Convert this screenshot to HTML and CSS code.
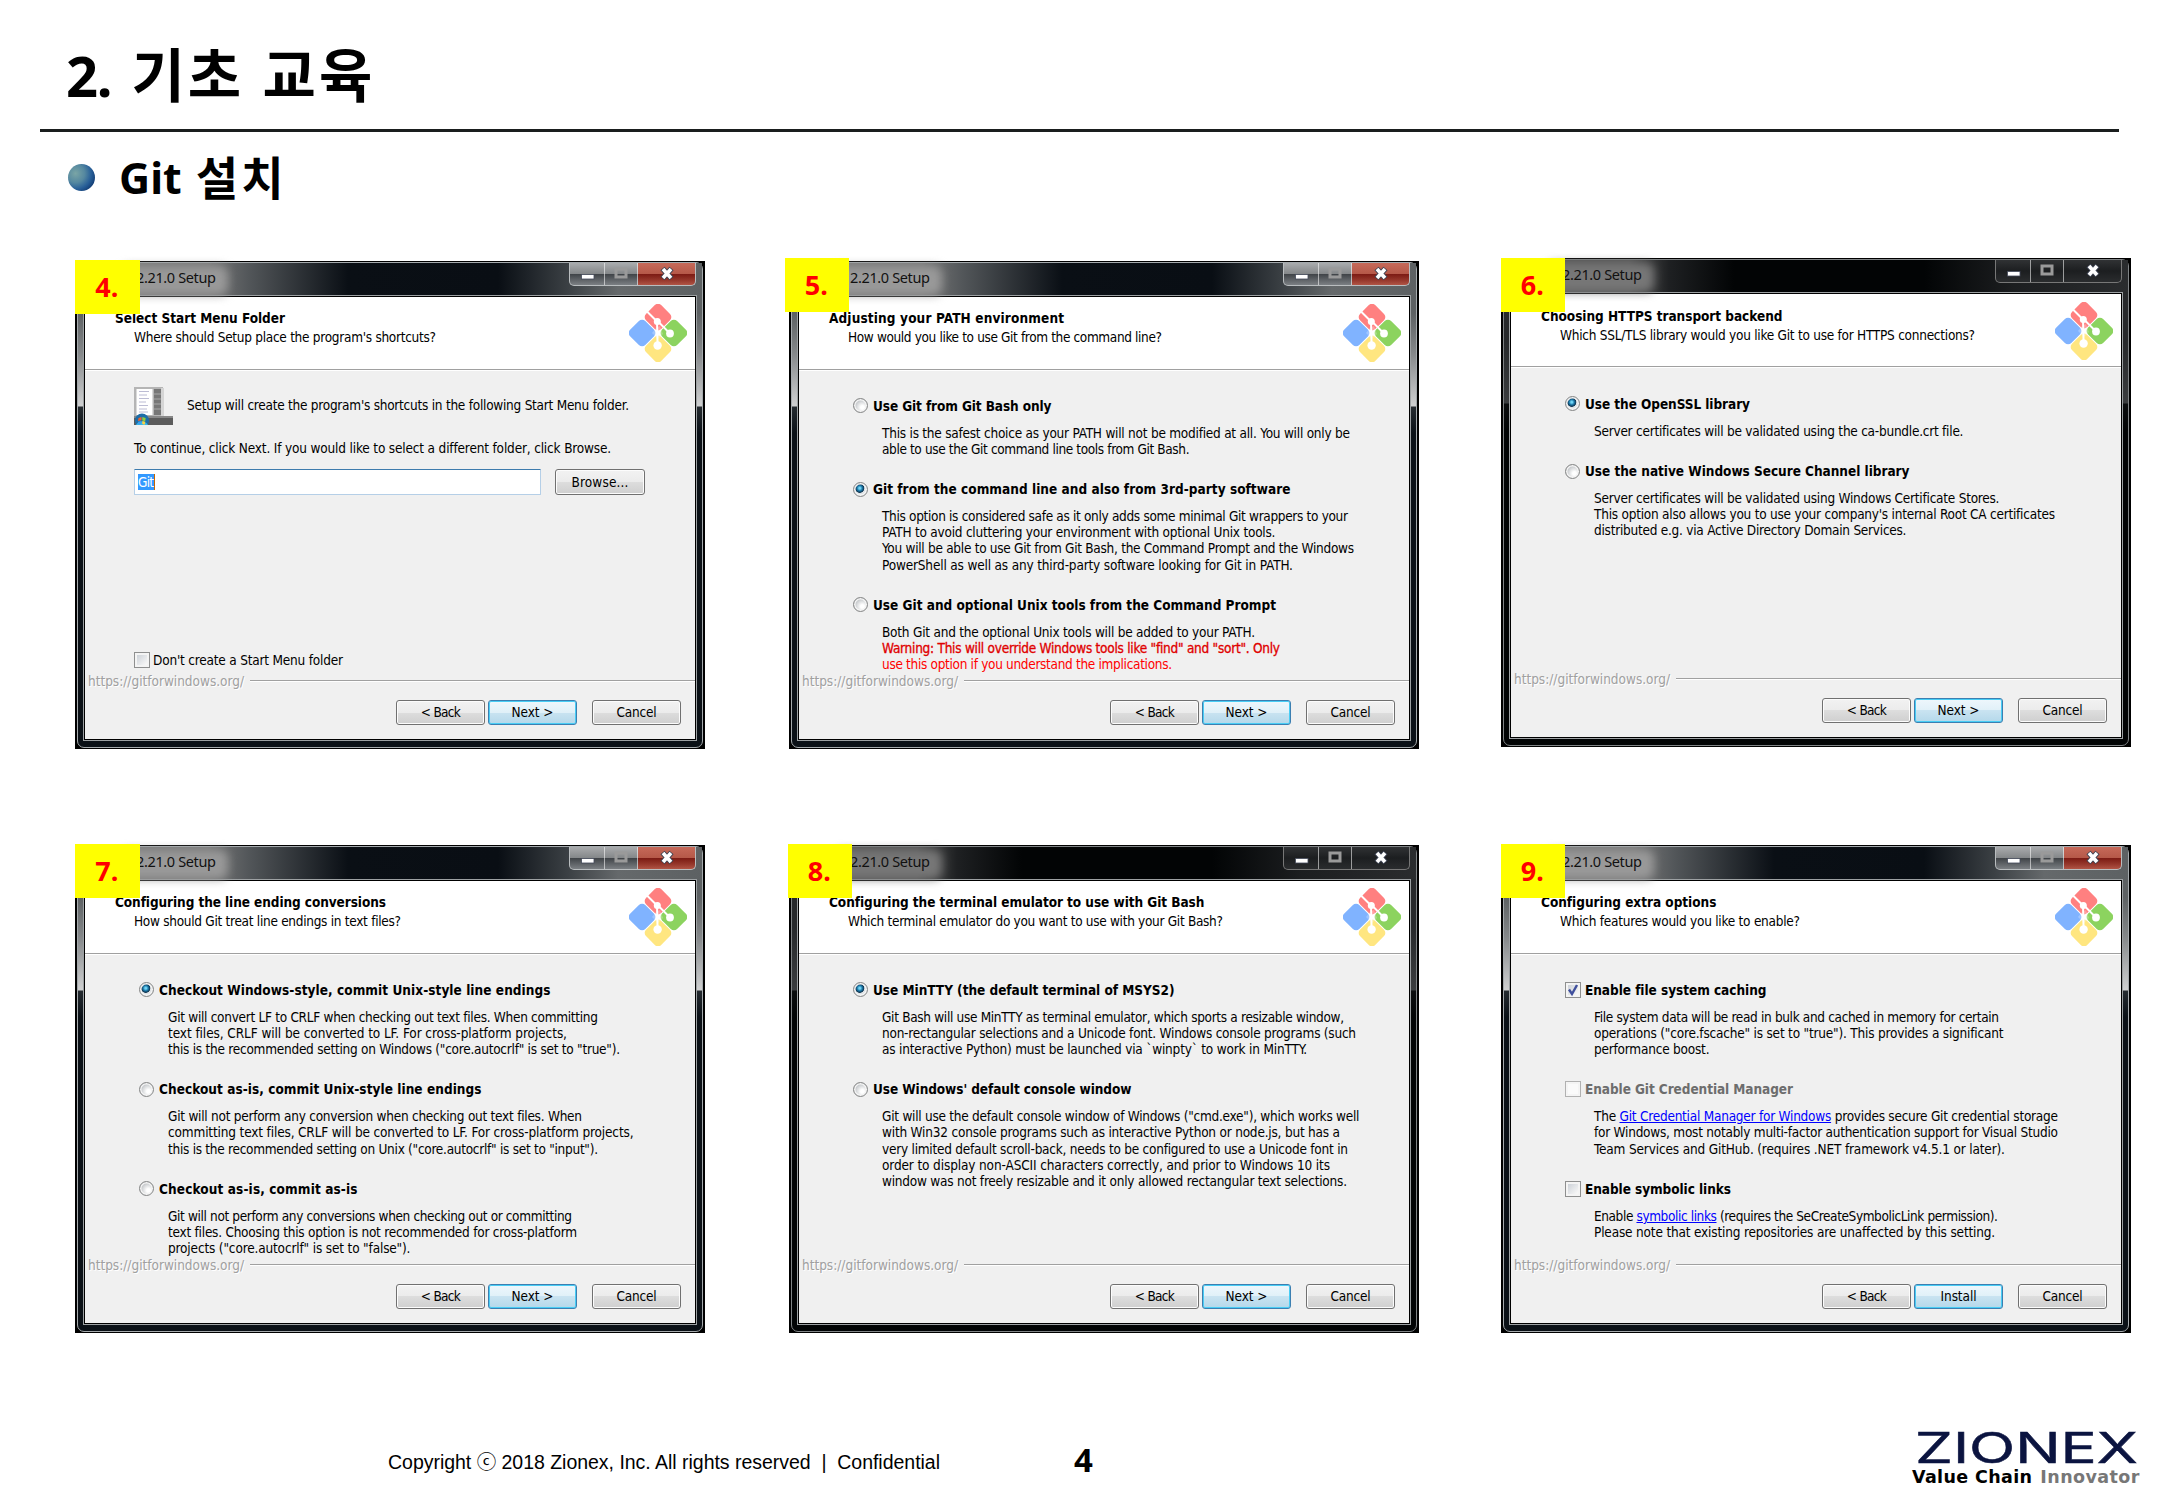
FILE: index.html
```html
<!DOCTYPE html>
<html lang="ko">
<head>
<meta charset="utf-8">
<title>2. 기초 교육</title>
<link rel="stylesheet" href="styles.css">
</head>
<body>
<svg class="defs" width="0" height="0" aria-hidden="true">
  <defs>
    <symbol id="git" viewBox="0 0 58 58">
      <g transform="rotate(45 29 29)">
        <rect x="7" y="7" width="21.500" height="21.500" rx="4.500" fill="#ff8080"/>
        <rect x="29.500" y="7" width="21.500" height="21.500" rx="4.500" fill="#8cd35f"/>
        <rect x="29.500" y="29.500" width="21.500" height="21.500" rx="4.500" fill="#ffe680"/>
        <rect x="7" y="29.500" width="21.500" height="21.500" rx="4.500" fill="#80b3ff"/>
        <path d="M24 24h10v10h-10z" fill="none"/>
      </g>
      <path d="M27 24L23 29L29 35L34 30L31 22z" fill="#fff" fill-opacity=".25"/>
      <path d="M17 6.500L28 17.500L28.600 41M28.500 17L41 29.500" fill="none" stroke="#fff" stroke-width="2"/>
      <circle cx="28.300" cy="17.500" r="3.500" fill="#fff"/>
      <circle cx="41" cy="29.500" r="3.900" fill="#fff"/>
      <circle cx="28.600" cy="41.500" r="4.200" fill="#fff"/>
    </symbol>
    <symbol id="controls" viewBox="0 0 125 22">
      <path d="M34.500 0V22M67.500 0V22" stroke="#fff" stroke-opacity=".55"/>
      <rect x="11.500" y="11.500" width="12.500" height="4.500" fill="#fff" stroke="#444a5a" stroke-width=".8"/>
      <rect x="46" y="6" width="10" height="8" fill="none" stroke="#9a9a9a" stroke-width="3"/>
      <path d="M92.500 5.500L101.500 15.500M101.500 5.500L92.500 15.500" stroke="#3c4252" stroke-width="5.600"/>
      <path d="M93 6L101 15M101 6L93 15" stroke="#fff" stroke-width="3.600"/>
    </symbol>
  </defs>
</svg>
<main class="slide">
  <header class="head"><h1><span class="no">2.</span><span class="ko" data-w="241">기초 교육</span></h1></header>
  <section class="topic"><span class="ball"></span><h2><span>Git</span><span class="ko" data-w="88">설치</span></h2></section>

  <section class="grid">
    <article class="window">
      <span class="badge">4.</span>
      <div class="frame">
        <div class="bar"><span class="caption" data-w="80">2.21.0 Setup</span><svg class="controls"><use href="#controls"/></svg></div>
        <div class="client">
          <div class="top"><div><h3 data-w="170">Select Start Menu Folder</h3><p data-w="302">Where should Setup place the program's shortcuts?</p></div><svg class="git"><use href="#git"/></svg></div>
          <div class="body folder">
            <div class="intro">
              <svg width="39" height="38" viewBox="0 0 39 38">
                <rect x="0" y="0" width="29" height="30" fill="#b5b5b5"/><rect x="27" y="1" width="3" height="28" fill="#d5d5d5"/>
                <rect x="2.500" y="2" width="16" height="26" fill="#fff"/>
                <path d="M5 4.500h10M5 8h8M5 11.500h10M5 15h7M5 18.500h9M5 22h8M5 25h9" stroke="#bcbcd4"/>
                <rect x="20" y="2" width="7" height="26" fill="#777"/><path d="M20 7h7M20 12h7M20 17h7M20 22h7" stroke="#aaa"/>
                <rect x="0" y="29" width="39" height="9" fill="#5c5c5c"/><rect x="0" y="29" width="39" height="2" fill="#888"/>
                <circle cx="8" cy="33.500" r="7" fill="#1d6da8"/><path d="M2 38a7 7 0 0 1 12 0z" fill="#38b6e8"/>
                <path d="M4.500 31l3-1v3.300l-3.500.7z" fill="#f0602c"/><path d="M8.300 30l3.400 1-.5 3.200-2.900-.8z" fill="#8fce3c"/><path d="M4 34.700l3.500-.7v3l-3.300.6z" fill="#39a0ee"/><path d="M8.300 34l3 .8-.7 3-2.300-.7z" fill="#ffd23c"/>
              </svg>
              <span data-w="442">Setup will create the program's shortcuts in the following Start Menu folder.</span>
            </div>
            <p class="hint"><span data-w="477">To continue, click Next. If you would like to select a different folder, click Browse.</span></p>
            <div class="path"><div class="input"><span class="sel"><span data-w="16">Git</span></span></div><span class="btn browse"><span data-w="57">Browse...</span></span></div>
            <div class="nofolder"><i class="check"></i><span data-w="190">Don't create a Start Menu folder</span></div>
          </div>
          <div class="url"><span data-w="156">https://gitforwindows.org/</span></div>
          <div class="actions"><span class="btn"><span data-w="40">&lt; Back</span></span><span class="btn main"><span data-w="42">Next &gt;</span></span><span class="btn cancel"><span data-w="40">Cancel</span></span></div>
        </div>
      </div>
    </article>

    <article class="window">
      <span class="badge b5">5.</span>
      <div class="frame">
        <div class="bar"><span class="caption" data-w="80">2.21.0 Setup</span><svg class="controls"><use href="#controls"/></svg></div>
        <div class="client">
          <div class="top"><div><h3 data-w="235">Adjusting your PATH environment</h3><p data-w="314">How would you like to use Git from the command line?</p></div><svg class="git"><use href="#git"/></svg></div>
          <div class="body">
            <div class="option"><i class="radio"></i><b data-w="178.500">Use Git from Git Bash only</b></div>
            <div class="desc"><span data-w="468">This is the safest choice as your PATH will not be modified at all. You will only be</span><span data-w="307.500">able to use the Git command line tools from Git Bash.</span></div>
            <div class="option"><i class="radio on"></i><b data-w="417.500">Git from the command line and also from 3rd-party software</b></div>
            <div class="desc"><span data-w="466">This option is considered safe as it only adds some minimal Git wrappers to your</span><span data-w="393.500">PATH to avoid cluttering your environment with optional Unix tools.</span><span data-w="472">You will be able to use Git from Git Bash, the Command Prompt and the Windows</span><span data-w="411">PowerShell as well as any third-party software looking for Git in PATH.</span></div>
            <div class="option"><i class="radio"></i><b data-w="403">Use Git and optional Unix tools from the Command Prompt</b></div>
            <div class="desc"><span data-w="373">Both Git and the optional Unix tools will be added to your PATH.</span><span class="warn strong" data-w="398">Warning: This will override Windows tools like "find" and "sort". Only</span><span class="warn" data-w="290">use this option if you understand the implications.</span></div>
          </div>
          <div class="url"><span data-w="156">https://gitforwindows.org/</span></div>
          <div class="actions"><span class="btn"><span data-w="40">&lt; Back</span></span><span class="btn main"><span data-w="42">Next &gt;</span></span><span class="btn cancel"><span data-w="40">Cancel</span></span></div>
        </div>
      </div>
    </article>

    <article class="window idle raised">
      <span class="badge b6">6.</span>
      <div class="frame">
        <div class="bar"><span class="caption" data-w="80">2.21.0 Setup</span><svg class="controls"><use href="#controls"/></svg></div>
        <div class="client">
          <div class="top"><div><h3 data-w="241.500">Choosing HTTPS transport backend</h3><p data-w="415">Which SSL/TLS library would you like Git to use for HTTPS connections?</p></div><svg class="git"><use href="#git"/></svg></div>
          <div class="body">
            <div class="option"><i class="radio on"></i><b data-w="165">Use the OpenSSL library</b></div>
            <div class="desc"><span data-w="369.500">Server certificates will be validated using the ca-bundle.crt file.</span></div>
            <div class="option"><i class="radio"></i><b data-w="324.500">Use the native Windows Secure Channel library</b></div>
            <div class="desc"><span data-w="405.500">Server certificates will be validated using Windows Certificate Stores.</span><span data-w="461">This option also allows you to use your company's internal Root CA certificates</span><span data-w="312.500">distributed e.g. via Active Directory Domain Services.</span></div>
          </div>
          <div class="url"><span data-w="156">https://gitforwindows.org/</span></div>
          <div class="actions"><span class="btn"><span data-w="40">&lt; Back</span></span><span class="btn main"><span data-w="42">Next &gt;</span></span><span class="btn cancel"><span data-w="40">Cancel</span></span></div>
        </div>
      </div>
    </article>

    <article class="window">
      <span class="badge">7.</span>
      <div class="frame">
        <div class="bar"><span class="caption" data-w="80">2.21.0 Setup</span><svg class="controls"><use href="#controls"/></svg></div>
        <div class="client">
          <div class="top"><div><h3 data-w="270.500">Configuring the line ending conversions</h3><p data-w="267">How should Git treat line endings in text files?</p></div><svg class="git"><use href="#git"/></svg></div>
          <div class="body">
            <div class="option"><i class="radio on"></i><b data-w="391.500">Checkout Windows-style, commit Unix-style line endings</b></div>
            <div class="desc"><span data-w="430">Git will convert LF to CRLF when checking out text files. When committing</span><span data-w="399">text files, CRLF will be converted to LF. For cross-platform projects,</span><span data-w="452">this is the recommended setting on Windows ("core.autocrlf" is set to "true").</span></div>
            <div class="option"><i class="radio"></i><b data-w="322.500">Checkout as-is, commit Unix-style line endings</b></div>
            <div class="desc"><span data-w="414">Git will not perform any conversion when checking out text files. When</span><span data-w="465.500">committing text files, CRLF will be converted to LF. For cross-platform projects,</span><span data-w="430">this is the recommended setting on Unix ("core.autocrlf" is set to "input").</span></div>
            <div class="option"><i class="radio"></i><b data-w="198.500">Checkout as-is, commit as-is</b></div>
            <div class="desc"><span data-w="404">Git will not perform any conversions when checking out or committing</span><span data-w="409">text files. Choosing this option is not recommended for cross-platform</span><span data-w="242.500">projects ("core.autocrlf" is set to "false").</span></div>
          </div>
          <div class="url"><span data-w="156">https://gitforwindows.org/</span></div>
          <div class="actions"><span class="btn"><span data-w="40">&lt; Back</span></span><span class="btn main"><span data-w="42">Next &gt;</span></span><span class="btn cancel"><span data-w="40">Cancel</span></span></div>
        </div>
      </div>
    </article>

    <article class="window idle">
      <span class="badge b8">8.</span>
      <div class="frame">
        <div class="bar"><span class="caption" data-w="80">2.21.0 Setup</span><svg class="controls"><use href="#controls"/></svg></div>
        <div class="client">
          <div class="top"><div><h3 data-w="375">Configuring the terminal emulator to use with Git Bash</h3><p data-w="375">Which terminal emulator do you want to use with your Git Bash?</p></div><svg class="git"><use href="#git"/></svg></div>
          <div class="body">
            <div class="option"><i class="radio on"></i><b data-w="301.500">Use MinTTY (the default terminal of MSYS2)</b></div>
            <div class="desc"><span data-w="462">Git Bash will use MinTTY as terminal emulator, which sports a resizable window,</span><span data-w="474">non-rectangular selections and a Unicode font. Windows console programs (such</span><span data-w="425">as interactive Python) must be launched via `winpty` to work in MinTTY.</span></div>
            <div class="option"><i class="radio"></i><b data-w="258.500">Use Windows' default console window</b></div>
            <div class="desc"><span data-w="477.500">Git will use the default console window of Windows ("cmd.exe"), which works well</span><span data-w="458">with Win32 console programs such as interactive Python or node.js, but has a</span><span data-w="466">very limited default scroll-back, needs to be configured to use a Unicode font in</span><span data-w="448">order to display non-ASCII characters correctly, and prior to Windows 10 its</span><span data-w="465">window was not freely resizable and it only allowed rectangular text selections.</span></div>
          </div>
          <div class="url"><span data-w="156">https://gitforwindows.org/</span></div>
          <div class="actions"><span class="btn"><span data-w="40">&lt; Back</span></span><span class="btn main"><span data-w="42">Next &gt;</span></span><span class="btn cancel"><span data-w="40">Cancel</span></span></div>
        </div>
      </div>
    </article>

    <article class="window">
      <span class="badge b9">9.</span>
      <div class="frame">
        <div class="bar"><span class="caption" data-w="80">2.21.0 Setup</span><svg class="controls"><use href="#controls"/></svg></div>
        <div class="client">
          <div class="top"><div><h3 data-w="175">Configuring extra options</h3><p data-w="240">Which features would you like to enable?</p></div><svg class="git"><use href="#git"/></svg></div>
          <div class="body">
            <div class="option"><i class="check"><svg viewBox="0 0 16 16"><path d="M4 7.500L7 12L12 3" fill="none" stroke="#3f4f9c" stroke-width="2.400"/></svg></i><b data-w="181">Enable file system caching</b></div>
            <div class="desc"><span data-w="405">File system data will be read in bulk and cached in memory for certain</span><span data-w="409.500">operations ("core.fscache" is set to "true"). This provides a significant</span><span data-w="115.500">performance boost.</span></div>
            <div class="option off"><i class="check"></i><b data-w="208">Enable Git Credential Manager</b></div>
            <div class="desc"><span data-w="464">The <a>Git Credential Manager for Windows</a> provides secure Git credential storage</span><span data-w="464">for Windows, most notably multi-factor authentication support for Visual Studio</span><span data-w="411">Team Services and GitHub. (requires .NET framework v4.5.1 or later).</span></div>
            <div class="option"><i class="check"></i><b data-w="146">Enable symbolic links</b></div>
            <div class="desc"><span data-w="404">Enable <a>symbolic links</a> (requires the SeCreateSymbolicLink permission).</span><span data-w="401">Please note that existing repositories are unaffected by this setting.</span></div>
          </div>
          <div class="url"><span data-w="156">https://gitforwindows.org/</span></div>
          <div class="actions"><span class="btn"><span data-w="40">&lt; Back</span></span><span class="btn main"><span data-w="36">Install</span></span><span class="btn cancel"><span data-w="40">Cancel</span></span></div>
        </div>
      </div>
    </article>
  </section>

  <footer class="foot">
    <span class="copy" data-w="552">Copyright ⓒ 2018 Zionex, Inc. All rights reserved&nbsp; |&nbsp; Confidential</span>
    <span class="page">4</span>
    <div class="brand">
      <svg width="222" height="34" viewBox="0 0 222 34"><text x="-2" y="32.500" textLength="223" lengthAdjust="spacingAndGlyphs">ZIONEX</text></svg>
      <div class="tag"><span data-w="120">Value Chain</span><span class="grey" data-w="99">Innovator</span></div>
    </div>
  </footer>
</main>
<script src="fit.js"></script>
</body>
</html>
```
FILE: fit.js
```js
// Tracks each line of text out or in so that it fills its own measure.
document.querySelectorAll('[data-w]').forEach(function (el) {
  var natural = el.getBoundingClientRect().width;
  var gaps = el.textContent.length - 1;
  el.style.letterSpacing = ((Number(el.dataset.w) - natural) / gaps).toFixed(3) + 'px';
});
```
FILE: styles.css
```css
* { box-sizing: border-box; }
body { margin: 0; background: #fff; color: #000; }
h1, h2, h3, p { margin: 0; }
.defs { position: absolute; }
[data-w] { display: block; width: max-content; white-space: pre; }

.slide { width: 2167px; height: 1500px; overflow: hidden; display: flex; flex-direction: column; font-family: "Noto Sans", "Noto Sans CJK KR", sans-serif; }
.head { height: 132px; margin: 0 48px 0 40px; padding: 35px 0 0 26px; border-bottom: 3px solid #1a1e1e; }
.head h1 { display: flex; gap: 20px; font-size: 56px; line-height: 80px; font-weight: 700; }
.head .no { letter-spacing: -1.2px; }
.head .ko { font-size: 58px; }
.topic { height: 129px; padding: 15.5px 0 0 68px; display: flex; gap: 24px; }
.topic h2 { display: flex; gap: 14px; font-size: 43px; line-height: 60px; font-weight: 700; }
.topic .ko { font-size: 46px; margin-top: -1px; }
.ball { width: 27px; height: 27px; margin-top: 16px; border-radius: 50%; background: radial-gradient(circle at 28% 35%, #7aa5a5 0, #5588a0 35%, #285f98 60%, #123c74 80%, #3f93a5 100%); }

.grid { display: grid; grid-template-columns: 630px 630px 630px; justify-content: start; grid-template-rows: 488px 488px; row-gap: 96px; padding-left: 75px; column-gap: 84px; font: 13.5px/16.1px "DejaVu Sans Condensed", "DejaVu Sans", sans-serif; font-stretch: condensed; }
.window { position: relative; width: 630px; height: 488px; padding: 1px 2px; background: #000; }
.window:nth-child(3n) { margin-left: -2px; }
.raised { margin-top: -3px; height: 489px; }
.frame { height: 486px; padding: 0 5px 5px; border: 1px solid #a5aaad; border-radius: 2px 7px 7px 7px; background: linear-gradient(#5d6163 0, #5d6163 50px, #85888a 90px, #cfd0d1 143px, #252b30 144px, #0b1117 170px); }
.raised .frame { height: 487px; }
.bar { display: flex; justify-content: space-between; height: 32px; margin: 0 -5px; padding: 0 6px 0 58px; background: linear-gradient(90deg, #777 0, #777 130px, #53575a 170px, #0a0f15 270px, #090e14 420px, #3b4044 490px, #65696b 540px, #5d6163 100%); }
.caption { position: relative; margin: 3.4px 0 0; font: 14.5px/22px "Noto Sans", sans-serif; color: #111; z-index: 0; }
.caption::before { content: ""; position: absolute; z-index: -1; inset: 0 -12px 0 -15px; background: #999; filter: blur(5px); border-radius: 8px; }
.controls { width: 127px; height: 23px; border: solid #b9bdbf; border-width: 0 1px 1px; border-radius: 0 0 5px 5px; background: linear-gradient(transparent 48%, #6008 50%, transparent) 68px 0 no-repeat, linear-gradient(90deg, transparent 68px, #e0301088 68px), linear-gradient(#a9abad 0, #85888a 48%, #3f4347 50%, #7b7f83 100%); }
.idle .frame { border-color: #808486; background: linear-gradient(#27292b 0, #27292b 80px, #3b3d3f 143px, #0b0d0e 144px, #020405 170px); }
.idle .bar { background: linear-gradient(90deg, #555 0, #555 125px, #1e2022 165px, #020405 230px, #020405 420px, #1c1e20 510px, #2a2c2e 100%); }
.idle .caption::before { background: #777; }
.idle .controls { background: linear-gradient(#303234, #1c1e20 50%, #2a2c2e); border-color: #777; }
.client { height: 446px; border: 1px solid #9da1a3; outline: 1px solid #000; outline-offset: -2px; padding: 1px; background: #f0f0f0; display: flex; flex-direction: column; }
.raised .client { height: 447px; }
.top { height: 74px; flex: none; display: flex; justify-content: space-between; padding: 12.8px 8px 0 30px; background: #fff; border-bottom: 1px solid #fff; box-shadow: inset 0 -1px #a0a0a0; }
.top h3 { font-size: inherit; font-weight: 700; }
.top p { margin: 3.4px 0 0 19px; }
.raised .top { padding-top: 13.5px; }
.git { width: 58px; height: 58px; margin-top: -6px; }
.body { height: 302px; flex: none; padding-top: 26.8px; }
.raised .body { height: 303px; padding-top: 27.8px; }
.option { height: 16.1px; padding-left: 54px; display: flex; gap: 5px; align-items: center; }
.desc { padding: 10.9px 0 24.3px 83px; }
.warn { color: #f00; }
.strong { color: #e00000; -webkit-text-stroke: .3px #e00000; }
.off { color: #6d6d6d; }
a { color: #00f; text-decoration: underline; }
.radio { flex: none; width: 15px; height: 15px; border-radius: 50%; border: 1px solid #858686; background: radial-gradient(circle at 65% 65%, #fff 0 15%, #c3c6c9 65%); box-shadow: inset 0 0 0 1.5px #f4f4f4; }
.radio.on { background: radial-gradient(circle at 44% 40%, #6fd4f5 0 8%, #1c78a8 24%, #0e3450 40%, #dfe3e6 46%); }
.check { flex: none; width: 16px; height: 16px; border: 1px solid #8e8f8f; background: linear-gradient(135deg, #c4cad2, #f6f6f6 80%); box-shadow: inset 0 0 0 2px #f4f4f4; display: block; margin-right: -1px; }
.check svg { display: block; margin: -1px; width: 16px; height: 16px; }
.off .check { border-color: #b1b1b1; background: #fafafa; }

.folder { padding: 16px 0 0 49px; }
.intro { display: flex; align-items: center; gap: 14px; height: 38px; }
.intro span { margin-top: -2px; }
.hint { margin-top: 15px; }
.path { display: flex; gap: 14px; margin-top: 13px; }
.input { width: 407px; height: 26px; padding: 4px 3px; background: #fff; border: 1px solid #b5cfe7; border-top-color: #3d7bad; border-radius: 1px; }
.sel { display: block; width: 17px; height: 16px; line-height: 16px; background: #3399ff; color: #fff; border-right: 1px solid #c66600; }
.nofolder { display: flex; gap: 4px; align-items: center; height: 16px; margin-top: 157px; }

.url { height: 16.1px; flex: none; display: flex; align-items: center; gap: 6px; padding-left: 3px; color: #a0a0a0; text-shadow: 1px 1px #fff; }
.url::after { content: ""; flex: 1; height: 2px; background: linear-gradient(#a0a0a0 50%, #fff 50%); }
.actions { display: flex; justify-content: flex-end; margin-top: 10.9px; padding-right: 14px; gap: 3px; }
.btn { width: 89px; height: 25px; display: flex; align-items: center; justify-content: center; border: 1px solid #707070; border-radius: 3px; background: linear-gradient(#f2f2f2, #ebebeb 50%, #dddddd 50%, #cfcfcf); box-shadow: inset 0 0 0 1px #fcfcfc; padding-bottom: 1px; }
.btn.main { border-color: #3c7fb1; background: linear-gradient(#eef7fc, #e0f0f8 50%, #c9e3f1 50%, #b4d8ea); box-shadow: inset 0 0 0 1px #48cdf5; }
.btn.cancel { margin-left: 12px; }
.btn.browse { width: 90px; height: 26px; }

.badge { position: absolute; z-index: 2; left: 0; top: -1px; width: 64.5px; height: 54px; background: #ff0; color: #f00; font: 700 27px/54px "Noto Sans", sans-serif; text-align: center; padding-right: 1px; }
.b5 { left: -4.5px; top: -3px; }
.b6 { left: -.5px; top: 0; }
.b8 { left: -1.5px; }
.b9 { left: -.5px; }

.foot { flex: 1; display: flex; padding: 0 28px 0 388px; }
.copy { font: 19.5px/26px "Liberation Sans", "Noto Sans CJK KR", sans-serif; margin-top: 116px; }
.page { margin: 107px 0 0 134px; font: 700 33px/40px "Noto Sans", sans-serif; }
.brand { margin: 97px 0 0 auto; width: 227px; }
.brand svg { display: block; margin-left: 5px; overflow: visible; }
.brand text { font: 400 42px "Inter", sans-serif; fill: #0b1440; stroke: #0b1440; stroke-width: .5px; }
.tag { display: flex; gap: 8px; font: 700 17.5px/22px "DejaVu Sans", sans-serif; margin-top: 1.5px; }
.grey { color: #777; }
```
